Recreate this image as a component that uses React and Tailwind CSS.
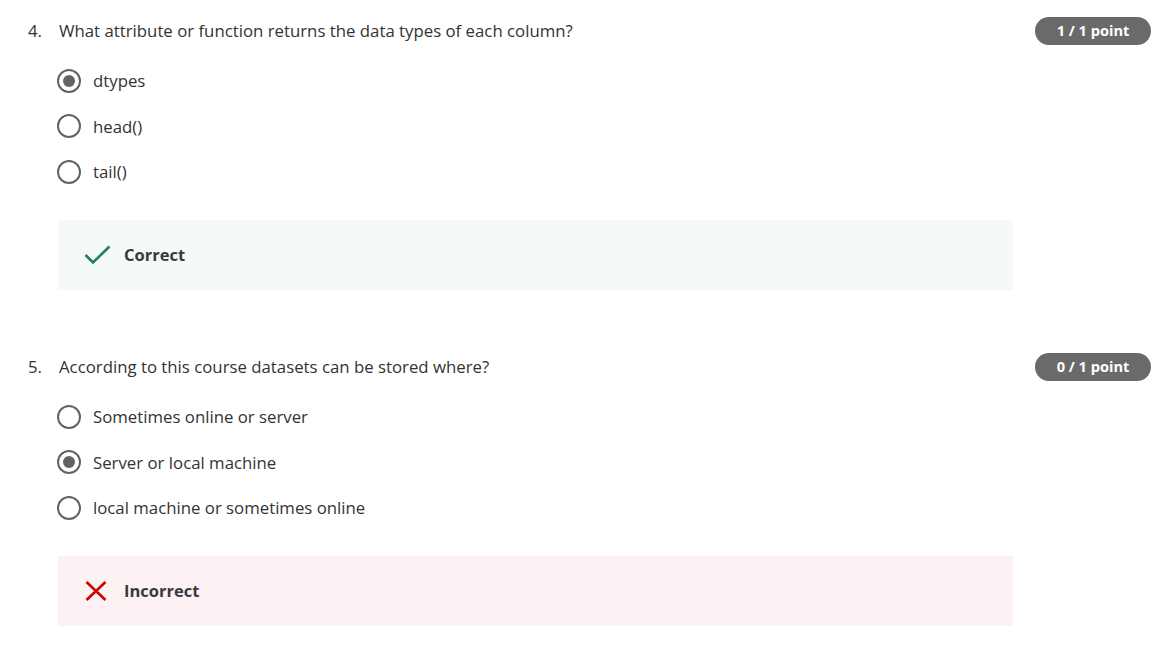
import React from "react";

function Radio({ checked }) {
  return (
    <span className="flex h-[24px] w-[24px] shrink-0 items-center justify-center rounded-full border-2 border-[#636363] bg-white">
      {checked && <span className="h-[12px] w-[12px] rounded-full bg-[#636363]" />}
    </span>
  );
}

function Question({ num, text, points, options, correct }) {
  return (
    <div className="pt-[17px] pb-[46px]">
      <div className="flex h-[28px] items-center">
        <span className="w-[31px] shrink-0 text-[16.8px] text-[#333333]">{num}.</span>
        <span className="flex-1 text-[16.8px] text-[#333333]">{text}</span>
        <span className="flex h-[28px] w-[116px] items-center justify-center rounded-full bg-[#6a6a6a] text-[14.6px] font-bold text-white">
          {points}
        </span>
      </div>
      <div className="mt-[13px] pl-[29px]">
        {options.map((o) => (
          <div key={o.label} className="flex h-[45.5px] items-center gap-[12px]">
            <Radio checked={o.checked} />
            <span className="text-[16.8px] text-[#333333]">{o.label}</span>
          </div>
        ))}
      </div>
      <div
        className={
          "ml-[30px] mt-[25.5px] flex h-[70px] w-[955px] items-center pl-[26px] " +
          (correct ? "bg-[#f5f9f8]" : "bg-[#fcf2f3]")
        }
      >
        <span className="flex w-[40px] items-center">
          {correct ? (
            <svg width="27" height="20" viewBox="0 0 27 20" fill="none">
              <path d="M1.5 10 L9 17.5 L25.5 1.5" stroke="#1f8354" strokeWidth="2.6" />
            </svg>
          ) : (
            <svg width="24" height="20" viewBox="0 0 24 20" fill="none">
              <path d="M2.5 1 L21.5 19 M21.5 1 L2.5 19" stroke="#d30001" strokeWidth="2.6" />
            </svg>
          )}
        </span>
        <span className="text-[16.5px] font-bold text-[#373a3c]">{correct ? "Correct" : "Incorrect"}</span>
      </div>
    </div>
  );
}

export default function App() {
  return (
    <div
      className="h-[645px] w-[1165px] overflow-hidden bg-white pl-[28px] pr-[14px]"
      style={{ fontFamily: '"Open Sans", "Liberation Sans", sans-serif' }}
    >
      <Question
        num="4"
        text="What attribute or function returns the data types of each column?"
        points="1 / 1 point"
        correct
        options={[
          { label: "dtypes", checked: true },
          { label: "head()" },
          { label: "tail()" },
        ]}
      />
      <Question
        num="5"
        text="According to this course datasets can be stored where?"
        points="0 / 1 point"
        correct={false}
        options={[
          { label: "Sometimes online or server" },
          { label: "Server or local machine", checked: true },
          { label: "local machine or sometimes online" },
        ]}
      />
    </div>
  );
}
